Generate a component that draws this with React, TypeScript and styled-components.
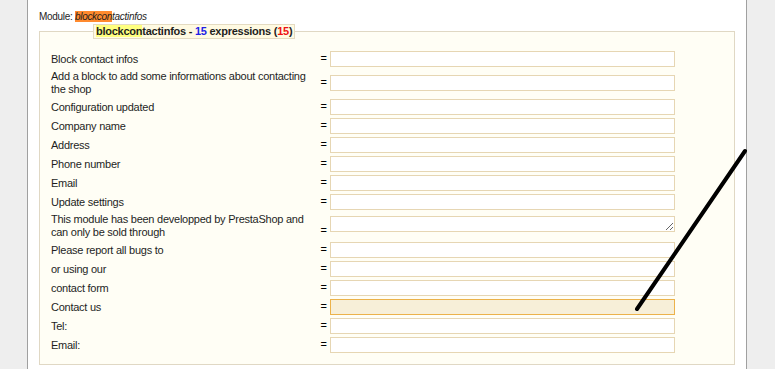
import styled, { createGlobalStyle } from 'styled-components';

const GlobalStyle = createGlobalStyle`
  html, body {
    margin: 0;
    padding: 0;
    background: #ffffff;
  }
  body {
    font-family: "Liberation Sans", Arial, sans-serif;
    font-size: 11px;
    letter-spacing: -0.25px;
    color: #1e1e1e;
  }
`

const Page = styled.div`
  position: relative;
  display: flex;
  min-height: 100vh;
`

const Gutter = styled.div<{ side: 'left' | 'right' }>`
  background: #eeeeee;
  width: ${p => (p.side === 'left' ? '27px' : '28px')};
  border-${p => (p.side === 'left' ? 'right' : 'left')}: 1px solid #a0a0a0;
  flex-shrink: 0;
`

const Main = styled.div`
  flex: 1;
  background: #ffffff;
  padding: 9px 11px 0 11px;
  box-sizing: border-box;
`

const ModuleLine = styled.div`
  font-size: 10px;
  letter-spacing: -0.3px;
  line-height: 13px;
  height: 13px;
  margin-bottom: 2px;
  padding-top: 1px;
  box-sizing: border-box;
`

const ModuleName = styled.i`
  font-style: italic;
`

const Mark = styled.span<{ tone: 'orange' | 'yellow' }>`
  background: ${p => (p.tone === 'orange' ? '#ff8a2e' : '#ffff80')};
`

const Fieldset = styled.fieldset`
  margin: 0;
  padding: 12px 11px 11px 11px;
  background: #fffef5;
  border: 1px solid #e0d8c4;
`

const Legend = styled.legend`
  margin-left: 42px;
  padding: 0 2px;
  line-height: 13px;
  font-weight: bold;
  font-size: 11px;
  background: #fffae2;
  border: 1px solid #e4dbc2;
  color: #1e1e1e;
`

const Count = styled.span<{ tone: 'blue' | 'red' }>`
  color: ${p => (p.tone === 'blue' ? '#2121e6' : '#ee1111')};
`

const Rows = styled.div`
  display: grid;
  grid-template-columns: 266px 13px 345px;
  row-gap: 3px;
  align-items: center;
`

const Label = styled.div`
  line-height: 13px;
  padding-right: 6px;
`

const Equals = styled.div<{ low?: boolean }>`
  text-align: center;
  line-height: 13px;
  color: #000000;
  align-self: ${p => (p.low ? 'end' : 'center')};
  margin-bottom: ${p => (p.low ? '2px' : '0')};
  margin-top: -2px;
`

const Field = styled.input<{ active?: boolean }>`
  display: block;
  box-sizing: border-box;
  width: 345px;
  height: 16px;
  margin: 0;
  padding: 0 2px;
  font: inherit;
  border: 1px solid ${p => (p.active ? '#ecb24a' : '#e6d6b3')};
  background: ${p => (p.active ? '#f7efd8' : '#ffffff')};
  outline: none;
`

const Area = styled.textarea`
  display: block;
  box-sizing: border-box;
  width: 345px;
  height: 16px;
  margin: 0;
  padding: 0 2px;
  font: inherit;
  border: 1px solid #e6d6b3;
  background: #ffffff;
  align-self: start;
  margin-top: 3px;
`

const Stroke = styled.svg`
  position: absolute;
  left: 0;
  top: 0;
  pointer-events: none;
`

type Row = { label: string; kind?: 'area'; active?: boolean }

const rows: Row[] = [
  { label: 'Block contact infos' },
  { label: 'Add a block to add some informations about contacting the shop' },
  { label: 'Configuration updated' },
  { label: 'Company name' },
  { label: 'Address' },
  { label: 'Phone number' },
  { label: 'Email' },
  { label: 'Update settings' },
  { label: 'This module has been developped by PrestaShop and can only be sold through', kind: 'area' },
  { label: 'Please report all bugs to' },
  { label: 'or using our' },
  { label: 'contact form' },
  { label: 'Contact us', active: true },
  { label: 'Tel:' },
  { label: 'Email:' },
]

export default function App() {
  return (
    <>
      <GlobalStyle />
      <Page>
        <Gutter side="left" />
        <Main>
          <ModuleLine>
            Module: <ModuleName><Mark tone="orange">blockcon</Mark>tactinfos</ModuleName>
          </ModuleLine>
          <Fieldset>
            <Legend>
              <Mark tone="yellow">blockcon</Mark>tactinfos - <Count tone="blue">15</Count> expressions (<Count tone="red">15</Count>)
            </Legend>
            <Rows>
              {rows.map(r => (
                <>
                  <Label key={r.label + 'l'}>{r.label}</Label>
                  <Equals key={r.label + 'e'} low={r.kind === 'area'}>=</Equals>
                  {r.kind === 'area'
                    ? <Area key={r.label + 'f'} />
                    : <Field key={r.label + 'f'} active={r.active} />}
                </>
              ))}
            </Rows>
          </Fieldset>
        </Main>
        <Gutter side="right" />
        <Stroke width="775" height="369" viewBox="0 0 775 369">
          <line x1="637" y1="309" x2="745" y2="151" stroke="#000" strokeWidth="4" strokeLinecap="round" />
        </Stroke>
      </Page>
    </>
  )
}
